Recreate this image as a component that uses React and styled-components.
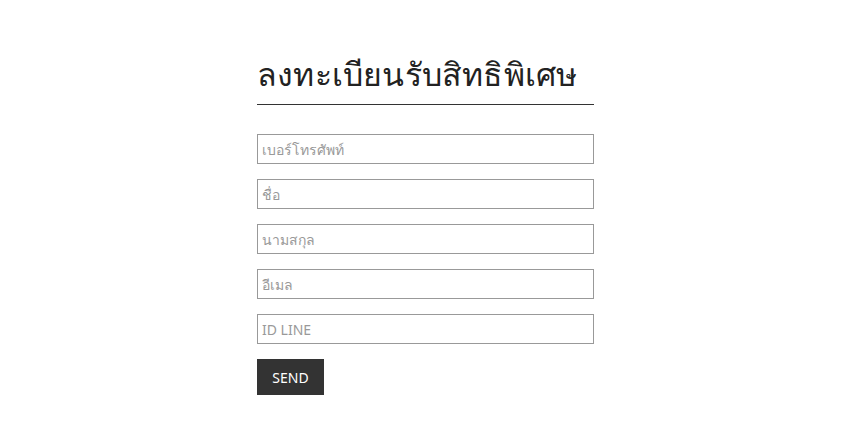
import React from 'react';
import styled, { createGlobalStyle } from 'styled-components';

const GlobalStyle = createGlobalStyle`
  body {
    margin: 0;
    background: #fff;
    font-family: "Noto Sans", "DejaVu Sans", sans-serif;
  }
`;

const Page = styled.div`
  display: flex;
  justify-content: center;
  padding-top: 51px;
  padding-left: 5px;
`;

const Form = styled.form`
  width: 337px;
  display: flex;
  flex-direction: column;
`;

const Title = styled.h2`
  margin: 0;
  padding-bottom: 8px;
  border-bottom: 1px solid #333;
  font-size: 32px;
  font-weight: 400;
  line-height: 45px;
  color: #222;
  letter-spacing: 0.2px;
`;

const Fields = styled.div`
  display: flex;
  flex-direction: column;
  gap: 15px;
  margin-top: 29px;
`;

const Field = styled.input`
  box-sizing: border-box;
  width: 100%;
  height: 30px;
  margin: 0;
  padding: 0 4px;
  border: 1px solid #999;
  border-radius: 0;
  font-family: inherit;
  font-size: 14px;
  color: #333;
  outline: none;

  &::placeholder {
    color: #999;
  }
`;

const SendButton = styled.button`
  align-self: flex-start;
  margin-top: 15px;
  width: 67px;
  height: 36px;
  border: none;
  background: #333;
  color: #fff;
  font-family: inherit;
  font-size: 14px;
  cursor: pointer;
`;

const fields = ['เบอร์โทรศัพท์', 'ชื่อ', 'นามสกุล', 'อีเมล', 'ID LINE'];

export default function App() {
  return (
    <>
      <GlobalStyle />
      <Page>
        <Form onSubmit={(e) => e.preventDefault()}>
          <Title>ลงทะเบียนรับสิทธิพิเศษ</Title>
          <Fields>
            {fields.map((f) => (
              <Field key={f} placeholder={f} />
            ))}
          </Fields>
          <SendButton type="submit">SEND</SendButton>
        </Form>
      </Page>
    </>
  );
}
